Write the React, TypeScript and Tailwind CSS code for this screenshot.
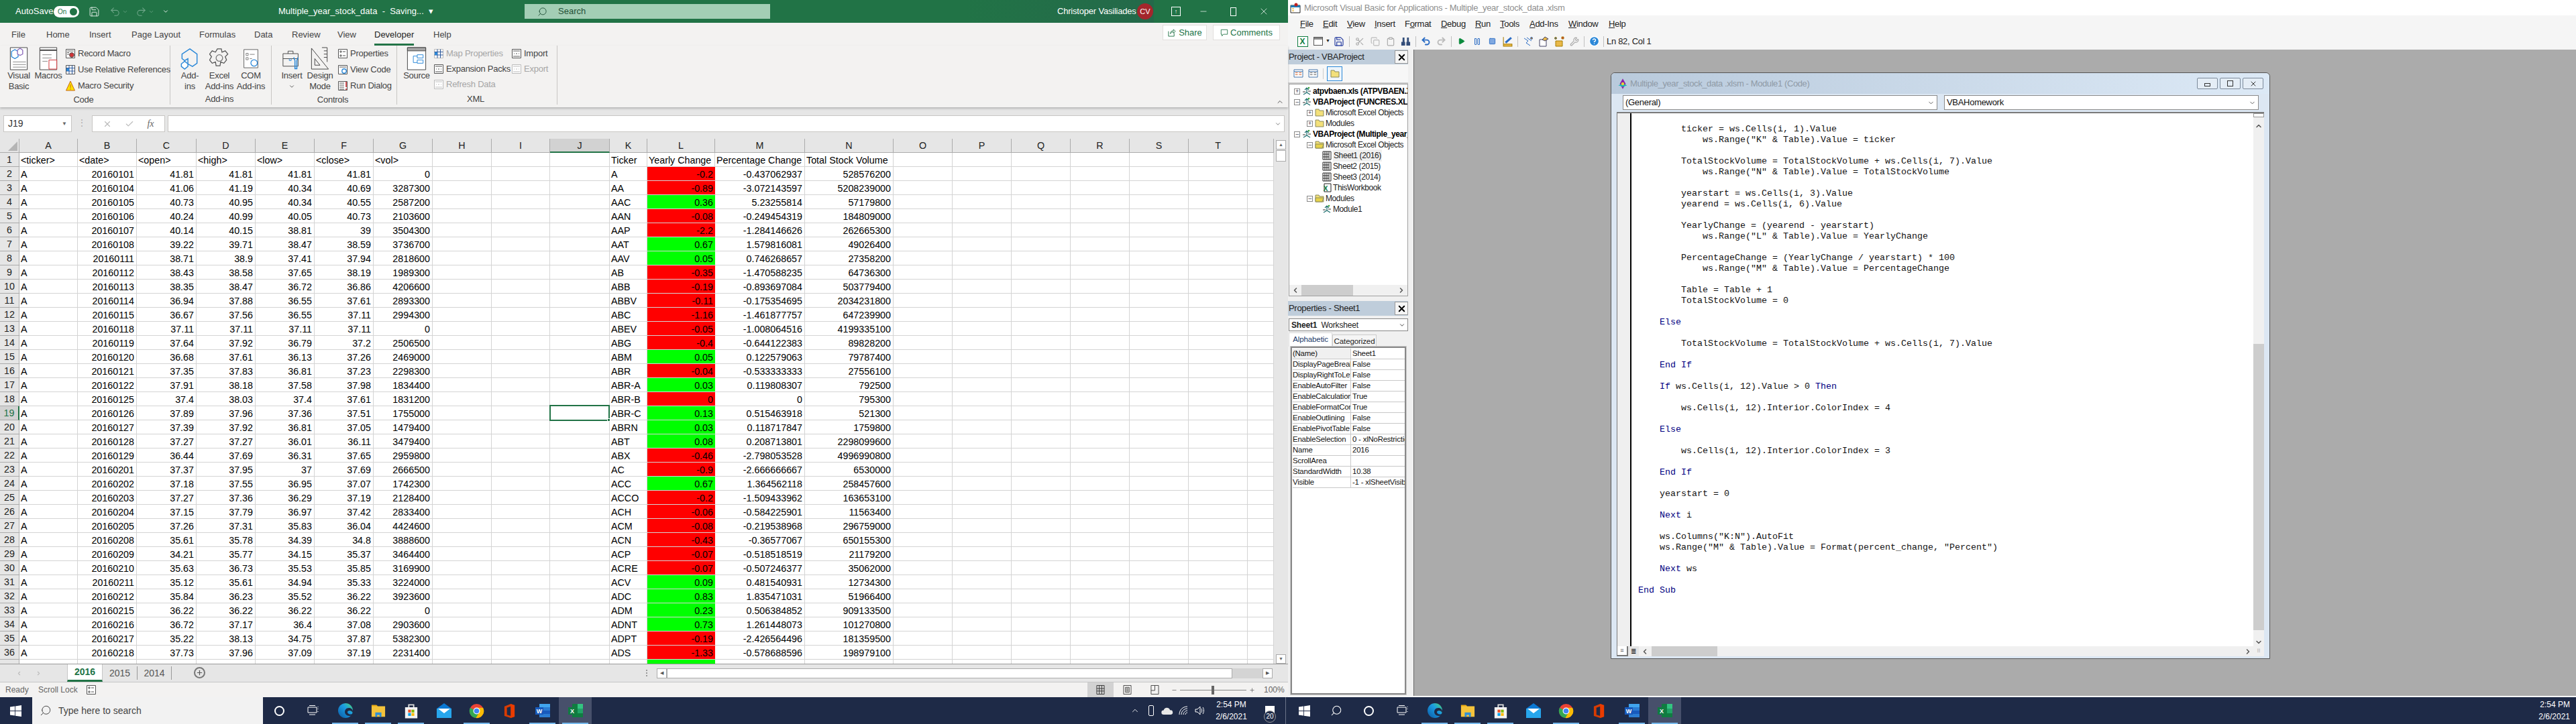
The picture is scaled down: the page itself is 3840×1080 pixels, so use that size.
import React from 'react';
import { ChevronDown, ChevronUp, ChevronLeft, ChevronRight, Check, Plus, Search, Undo2, Redo2, X, Minus, Play, Pause, Square, HelpCircle, Wrench, Scissors, Copy, Clipboard, Save } from 'lucide-react';

const ROWS: string[] = [
  '20160101 41.81 41.81 41.81 41.81 0','20160104 41.06 41.19 40.34 40.69 3287300','20160105 40.73 40.95 40.34 40.55 2587200',
  '20160106 40.24 40.99 40.05 40.73 2103600','20160107 40.14 40.15 38.81 39 3504300','20160108 39.22 39.71 38.47 38.59 3736700',
  '20160111 38.71 38.9 37.41 37.94 2818600','20160112 38.43 38.58 37.65 38.19 1989300','20160113 38.35 38.47 36.72 36.86 4206600',
  '20160114 36.94 37.88 36.55 37.61 2893300','20160115 36.67 37.56 36.55 37.11 2994300','20160118 37.11 37.11 37.11 37.11 0',
  '20160119 37.64 37.92 36.79 37.2 2506500','20160120 36.68 37.61 36.13 37.26 2469000','20160121 37.35 37.83 36.81 37.23 2298300',
  '20160122 37.91 38.18 37.58 37.98 1834400','20160125 37.4 38.03 37.4 37.61 1831200','20160126 37.89 37.96 37.36 37.51 1755000',
  '20160127 37.39 37.92 36.81 37.05 1479400','20160128 37.27 37.27 36.01 36.11 3479400','20160129 36.44 37.69 36.31 37.65 2959800',
  '20160201 37.37 37.95 37 37.69 2666500','20160202 37.18 37.55 36.95 37.07 1742300','20160203 37.27 37.36 36.29 37.19 2128400',
  '20160204 37.15 37.79 36.97 37.42 2833400','20160205 37.26 37.31 35.83 36.04 4424600','20160208 35.61 35.78 34.39 34.8 3888600',
  '20160209 34.21 35.77 34.15 35.37 3464400','20160210 35.63 36.73 35.53 35.85 3169900','20160211 35.12 35.61 34.94 35.33 3224000',
  '20160212 35.84 36.23 35.52 36.22 3923600','20160215 36.22 36.22 36.22 36.22 0','20160216 36.72 37.17 36.4 37.08 2903600',
  '20160217 35.22 38.13 34.75 37.87 5382300','20160218 37.73 37.96 37.09 37.19 2231400',
];

const SUMMARY: string[] = [
  'A -0.2 -0.437062937 528576200','AA -0.89 -3.072143597 5208239000','AAC 0.36 5.23255814 57179800','AAN -0.08 -0.249454319 184809000',
  'AAP -2.2 -1.284146626 262665300','AAT 0.67 1.579816081 49026400','AAV 0.05 0.746268657 27358200','AB -0.35 -1.470588235 64736300',
  'ABB -0.19 -0.893697084 503779400','ABBV -0.11 -0.175354695 2034231800','ABC -1.16 -1.461877757 647239900','ABEV -0.05 -1.008064516 4199335100',
  'ABG -0.4 -0.644122383 89828200','ABM 0.05 0.122579063 79787400','ABR -0.04 -0.533333333 27556100','ABR-A 0.03 0.119808307 792500',
  'ABR-B 0 0 795300','ABR-C 0.13 0.515463918 521300','ABRN 0.03 0.118717847 1759800','ABT 0.08 0.208713801 2298099600',
  'ABX -0.46 -2.798053528 4996990800','AC -0.9 -2.666666667 6530000','ACC 0.67 1.364562118 258457600','ACCO -0.2 -1.509433962 163653100',
  'ACH -0.06 -0.584225901 11563400','ACM -0.08 -0.219538968 296759000','ACN -0.43 -0.36577067 650155300','ACP -0.07 -0.518518519 21179200',
  'ACRE -0.07 -0.507246377 35062000','ACV 0.09 0.481540931 12734300','ADC 0.83 1.835471031 51966400','ADM 0.23 0.506384852 909133500',
  'ADNT 0.73 1.261448073 101270800','ADPT -0.19 -2.426564496 181359500','ADS -1.33 -0.578688596 198979100',
];

const COLS = ['A','B','C','D','E','F','G','H','I','J','K','L','M','N','O','P','Q','R','S','T',''];
const GRID = 'grid grid-cols-[29px_87px_88px_89px_88px_88px_88px_88px_88px_87px_89px_56px_101px_134px_132px_88px_88px_88px_88px_88px_88px_39px]';

const CODE = [
  '        ticker = ws.Cells(i, 1).Value','            ws.Range("K" & Table).Value = ticker','',
  '        TotalStockVolume = TotalStockVolume + ws.Cells(i, 7).Value','            ws.Range("N" & Table).Value = TotalStockVolume','',
  '        yearstart = ws.Cells(i, 3).Value','        yearend = ws.Cells(i, 6).Value','',
  '        YearlyChange = (yearend - yearstart)','            ws.Range("L" & Table).Value = YearlyChange','',
  '        PercentageChange = (YearlyChange / yearstart) * 100','            ws.Range("M" & Table).Value = PercentageChange','',
  '        Table = Table + 1','        TotalStockVolume = 0','',
  '    Else','','        TotalStockVolume = TotalStockVolume + ws.Cells(i, 7).Value','',
  '    End If','','    If ws.Cells(i, 12).Value > 0 Then','','        ws.Cells(i, 12).Interior.ColorIndex = 4','',
  '    Else','','        ws.Cells(i, 12).Interior.ColorIndex = 3','','    End If','','    yearstart = 0','',
  '    Next i','','    ws.Columns("K:N").AutoFit','    ws.Range("M" & Table).Value = Format(percent_change, "Percent")','',
  '    Next ws','','End Sub',
];

const PROPS = [
  ['(Name)','Sheet1'],['DisplayPageBreak','False'],['DisplayRightToLef','False'],['EnableAutoFilter','False'],['EnableCalculation','True'],
  ['EnableFormatCon','True'],['EnableOutlining','False'],['EnablePivotTable','False'],['EnableSelection','0 - xlNoRestrictions'],['Name','2016'],
  ['ScrollArea',''],['StandardWidth','10.38'],['Visible','-1 - xlSheetVisible'],
];

const Doc = ({ className, children }: { className?: string; children?: React.ReactNode }) => (
  <svg viewBox="0 0 30 36" className={className} fill="none">
    <path d="M2 1h26v34H2z" fill="#fff" stroke="#444" />
    {children}
  </svg>
);

const Tiny = ({ color = '#555', kind = 'lines' }: { color?: string; kind?: string }) => (
  <svg viewBox="0 0 16 16" className="w-[16px] h-[16px] shrink-0" fill="none" stroke={color}>
    <path d="M1.5 1.5h13v13h-13z" fill="#fff" />
    {kind === 'rec' && <circle cx="10" cy="10" r="3.4" fill="#d13438" stroke="#555" />}
    {kind === 'rec' && <path d="M3 4h10M3 6.500h3M3 9h3" />}
    {kind === 'grid' && <path d="M1.5 5.500h13M1.5 10h13M6 1.500v13M10.500 1.500v13" stroke="#2b579a" />}
    {kind === 'grid' && <path d="M2 6h4v4H2z" fill="#2b88d8" stroke="none" />}
    {kind === 'lines' && <path d="M4 4h2v2H4zM4 10h2v2H4zM8 5h4M8 11h4" />}
    {kind === 'find' && <circle cx="10" cy="10" r="3.2" stroke="#2b88d8" strokeWidth="1.4" />}
    {kind === 'find' && <path d="M3 4h10" />}
    {kind === 'run' && <path d="M3 4h7M3 7h7M3 10h7M3 13h7" />}
    {kind === 'run' && <path d="M13 2v8M13 12v2" stroke="#d13438" strokeWidth="1.6" />}
    {kind === 'xml' && <path d="M4 8h1M7 8h2M11 8h1M3 4h10M3 12h10" />}
  </svg>
);

const Warn = () => (
  <svg viewBox="0 0 16 16" className="w-[16px] h-[16px] shrink-0">
    <path d="M8 1l6.500 14h-13z" fill="#fce100" stroke="#c8671a" />
    <path d="M8 6v5M8 12v1.500" stroke="#c8671a" />
  </svg>
);

const SmallRow = ({ icon, label, dim, h = 'h-[24px]' }: { icon: React.ReactNode; label: string; dim?: boolean; h?: string }) => (
  <div className={`flex items-center gap-[3px] ${h} whitespace-nowrap ${dim ? 'text-[#a6a6a6]' : 'text-[#444]'}`}>
    {icon}
    <span>{label}</span>
  </div>
);

const BigBtn = ({ w, icon, lines, chevron }: { w: string; icon: React.ReactNode; lines: string[]; chevron?: boolean }) => (
  <div className={`${w} shrink-0 flex flex-col items-center text-[#444] leading-[16px] text-center`}>
    <div className="h-[37px] pt-[2px] flex items-start justify-center">{icon}</div>
    {lines.map((l) => <div key={l} className="whitespace-nowrap">{l}</div>)}
    {chevron && <ChevronDown className="w-[10px] h-[10px] mt-[3px]" />}
  </div>
);

const Group = ({ w, label, children }: { w: string; label: string; children: React.ReactNode }) => (
  <div className={`${w} shrink-0 h-[88px] border-r border-[#c8c6c4] flex flex-col`}>
    <div className="h-[76px] flex">{children}</div>
    <div className="text-center text-[#444] leading-[16px] pr-[4px] pt-[1px]">{label}</div>
  </div>
);

const TitleBar = () => (
  <div className="h-[34px] bg-[#217346] flex items-center text-white text-[13px] relative overflow-hidden shrink-0">
    <div className="absolute left-[1440px] top-0 w-[280px] h-[34px] bg-gradient-to-r from-[#217346] to-[#24694a]" />
    <span className="ml-[23px] w-[57px]">AutoSave</span>
    <div className="w-[38px] h-[17px] rounded-full bg-white text-[#217346] text-[10px] flex items-center justify-between pl-[6px] pr-[3px]">
      On <span className="w-[11px] h-[11px] rounded-full bg-[#217346]" />
    </div>
    <Save className="ml-[14px] w-[17px] h-[17px]" strokeWidth={1.2} />
    <Undo2 className="ml-[14px] w-[17px] h-[17px] text-[#6fa78a]" strokeWidth={1.5} />
    <ChevronDown className="w-[9px] h-[9px] text-[#6fa78a] ml-[2px]" />
    <Redo2 className="ml-[11px] w-[17px] h-[17px] text-[#6fa78a]" strokeWidth={1.5} />
    <ChevronDown className="w-[9px] h-[9px] text-[#6fa78a] ml-[2px]" />
    <ChevronDown className="w-[10px] h-[10px] ml-[12px]" />
    <span className="ml-[163px] w-[205px] whitespace-nowrap">Multiple_year_stock_data&nbsp; -&nbsp; Saving...&nbsp; ▾</span>
    <div className="ml-[162px] w-[366px] h-[22px] bg-[#a3ceb5] flex items-center text-[#1f4e36]">
      <Search className="ml-[19px] w-[15px] h-[15px] -scale-x-100" strokeWidth={1.4} />
      <span className="ml-[16px]">Search</span>
    </div>
    <span className="ml-[428px] w-[112px] whitespace-nowrap relative tracking-[-0.2px]">Christoper Vasiliades</span>
    <div className="ml-[7px] w-[24px] h-[24px] rounded-full bg-[#a4262c] flex items-center justify-center text-[11px] relative">CV</div>
    <div className="ml-[27px] w-[14px] h-[14px] border border-white flex items-center justify-center text-[9px] leading-none relative">↑</div>
    <Minus className="ml-[27px] w-[14px] h-[14px] relative" strokeWidth={1.2} />
    <div className="ml-[33px] w-[9px] h-[13px] border border-white relative" />
    <X className="ml-[33px] w-[16px] h-[16px] relative" strokeWidth={1.1} />
  </div>
);

const RibbonTabs = () => {
  const tabs: [string, string][] = [['File','w-[52px]'],['Home','w-[64px]'],['Insert','w-[63px]'],['Page Layout','w-[101px]'],['Formulas','w-[82px]'],['Data','w-[56px]'],['Review','w-[68px]'],['View','w-[55px]'],['Developer','w-[88px]'],['Help','w-[60px]']];
  return (
    <div className="h-[34px] pl-[17px] flex items-start text-[13px] text-[#444] relative shrink-0">
      {tabs.map(([t, w]) => (
        <div key={t} className={`${w} pt-[8px]`}>
          <span className={`inline-block h-[26px] ${t === 'Developer' ? 'border-b-[3px] border-[#217346] text-[#222]' : ''}`}>{t}</span>
        </div>
      ))}
      <div className="ml-auto flex items-start gap-[9px] pr-[12px] pt-[3px] text-[#217346]">
        <div className="w-[66px] h-[23px] bg-white border border-[#e1dfdd] flex items-center justify-center gap-[4px]">
          <svg viewBox="0 0 14 14" className="w-[13px] h-[13px]" fill="none" stroke="#217346"><path d="M2 5v8h9V8M5 9c0-3 2-5 5-5V2l3 3-3 3V6c-2 0-4 1-5 3z" /></svg>Share
        </div>
        <div className="w-[100px] h-[23px] bg-white border border-[#e1dfdd] flex items-center justify-center gap-[3px]">
          <svg viewBox="0 0 14 14" className="w-[12px] h-[12px]" fill="none" stroke="#217346"><path d="M1.500 1.500h11v8h-7l-2.500 3v-3h-1.500z" /></svg>Comments
        </div>
      </div>
    </div>
  );
};

const Ribbon = () => (
  <div className="h-[92px] flex text-[13px] tracking-[-0.25px] relative shadow-[0_2px_3px_#b5b5b5] shrink-0 bg-[#f3f2f1] z-10">
    <Group w="w-[254px]" label="Code">
      <BigBtn w="w-[52px] pl-[4px]" lines={['Visual', 'Basic']} icon={
        <Doc className="w-[30px] h-[35px]">
          <path d="M4 7l5-3 5 3v8l-5 3-5-3z" fill="#fff" stroke="#2b88d8" strokeWidth="1.3" />
          <path d="M13 5l4-3 4 3v6l-4 2-4-2z" fill="#fff" stroke="#8764b8" strokeWidth="1.3" />
          <path d="M6 23h20M6 27h20M6 31h20" stroke="#888" />
        </Doc>} />
      <BigBtn w="w-[40px]" lines={['Macros']} icon={
        <Doc className="w-[30px] h-[35px]">
          <path d="M2 5h26" stroke="#444" strokeWidth="2" />
          <path d="M6 12h14M6 17h14M6 22h8" stroke="#888" />
          <path d="M16 20h12v14H16z" fill="#fff" stroke="#d13438" />
        </Doc>} />
      <div className="ml-[5px] flex flex-col">
        <SmallRow icon={<Tiny kind="rec" />} label="Record Macro" />
        <SmallRow icon={<Tiny kind="grid" />} label="Use Relative References" />
        <SmallRow icon={<Warn />} label="Macro Security" />
      </div>
    </Group>
    <Group w="w-[151px]" label="Add-ins">
      <BigBtn w="w-[50px] pl-[8px]" lines={['Add-', 'ins']} icon={
        <svg viewBox="0 0 30 36" className="w-[30px] h-[35px]" fill="none" stroke="#2b88d8" strokeWidth="1.5">
          <path d="M15 3l11 8v14l-7 5-7-4V18l-5 3-4-3v-7z" /><path d="M7 22l5 4v4l-5 4-5-4v-4z" fill="#fff" />
        </svg>} />
      <BigBtn w="w-[46px]" lines={['Excel', 'Add-ins']} icon={
        <svg viewBox="0 0 30 36" className="w-[30px] h-[35px]" fill="none" stroke="#555" strokeWidth="1.3">
          <path d="M12 3h6l1 5 5-2 4 5-4 4 2 5-4 5-5-2-1 6h-6l-1-6-5 2-4-5 3-5-3-4 4-5 5 2z" /><circle cx="15" cy="17" r="5" stroke="#777" />
        </svg>} />
      <BigBtn w="w-[48px]" lines={['COM', 'Add-ins']} icon={
        <Doc className="w-[24px] h-[35px]">
          <path d="M6 8h4v4H6zM6 16h4v4H6zM13 10h9M13 18h4" stroke="#666" />
          <circle cx="21" cy="26" r="6" fill="#fff" stroke="#2b88d8" strokeWidth="1.6" />
        </Doc>} />
    </Group>
    <Group w="w-[187px]" label="Controls">
      <BigBtn w="w-[48px] pl-[12px]" lines={['Insert']} chevron icon={
        <svg viewBox="0 0 32 36" className="w-[30px] h-[35px]" fill="none" stroke="#444">
          <path d="M2 10h24v20H2zM10 10V6h8v4M2 18h24" />
          <path d="M19 16l2 5v13h3V21l2-5" stroke="#2b88d8" strokeWidth="1.6" />
          <path d="M12 18v3h3v-3" stroke="#2b88d8" />
        </svg>} />
      <BigBtn w="w-[48px]" lines={['Design', 'Mode']} icon={
        <svg viewBox="0 0 30 36" className="w-[30px] h-[35px]" fill="none" stroke="#444">
          <path d="M2 2l26 32H2z" /><path d="M7 18l8 10H7z" />
          <path d="M18 1h8v22" /><path d="M21 6h5M21 11h5M21 16h5" />
        </svg>} />
      <div className="ml-[2px] flex flex-col">
        <SmallRow icon={<Tiny kind="lines" />} label="Properties" />
        <SmallRow icon={<Tiny kind="find" />} label="View Code" />
        <SmallRow icon={<Tiny kind="run" />} label="Run Dialog" />
      </div>
    </Group>
    <Group w="w-[239px]" label="XML">
      <BigBtn w="w-[54px] pl-[4px]" lines={['Source']} icon={
        <svg viewBox="0 0 30 36" className="w-[30px] h-[35px]" fill="none" stroke="#444">
          <path d="M1 1h28v34H1z" fill="#fff" /><path d="M1 1h28v5H1z" fill="#a6a6a6" />
          <path d="M16 12h9v5h-9zM16 20h9v5h-9zM10 14h6M10 14v10h6" stroke="#2b88d8" />
        </svg>} />
      <div className="flex flex-col w-[116px]">
        <SmallRow dim h="h-[23px]" icon={<Tiny color="#bbb" kind="grid" />} label="Map Properties" />
        <SmallRow h="h-[23px]" icon={<Tiny kind="xml" />} label="Expansion Packs" />
        <SmallRow dim h="h-[23px]" icon={<Tiny color="#bbb" kind="xml" />} label="Refresh Data" />
      </div>
      <div className="flex flex-col">
        <SmallRow h="h-[23px]" icon={<Tiny kind="xml" />} label="Import" />
        <SmallRow dim h="h-[23px]" icon={<Tiny color="#bbb" kind="xml" />} label="Export" />
      </div>
    </Group>
    <ChevronUp className="absolute right-[6px] bottom-[2px] w-[12px] h-[12px] text-[#555]" />
  </div>
);

const FormulaBar = () => (
  <div className="h-[47px] bg-[#e6e6e6] flex items-start pt-[12px] pl-[5px] text-[14px] shrink-0">
    <div className="w-[102px] h-[25px] bg-white border border-[#c8c6c4] flex items-center justify-between px-[6px] text-[#333]">
      J19<span className="text-[8px] text-[#666]">▼</span>
    </div>
    <div className="w-[30px] text-center text-[#aaa] leading-[22px] text-[12px]">⋮</div>
    <div className="w-[109px] h-[25px] bg-white border border-[#c8c6c4] flex items-center justify-around px-[6px] text-[#bbb]">
      <X className="w-[14px] h-[14px]" /><Check className="w-[14px] h-[14px]" />
      <span className="font-['Liberation_Serif',serif] italic text-[#666]">fx</span>
    </div>
    <div className="ml-[4px] w-[1665px] h-[25px] bg-white border border-[#c8c6c4] flex items-center justify-end pr-[4px]">
      <ChevronDown className="w-[10px] h-[10px] text-[#666]" />
    </div>
  </div>
);

const RowCells = ({ r }: { r: number }) => {
  const cell = 'h-[21px] border-r border-b border-[#d4d4d4] overflow-hidden whitespace-nowrap leading-[21px] pt-[1px]';
  const hdr = ['<ticker>', '<date>', '<open>', '<high>', '<low>', '<close>', '<vol>'];
  const sum = r >= 2 && r <= 36 ? SUMMARY[r - 2].split(' ') : null;
  const data = r >= 2 && r <= 36 ? ['A', ...ROWS[r - 2].split(' ')] : null;
  const sel = r === 19;
  const lBg = r === 1 ? 'bg-white' : r === 37 ? 'bg-[#00ff00]' : sum && (sum[1].startsWith('-') || sum[1] === '0') ? 'bg-[#ff0000]' : 'bg-[#00ff00]';
  return (
    <>
      <div className={`h-[21px] border-b border-[#ababab] text-center leading-[21px] ${sel ? 'bg-[#d2d2d2] text-[#217346] border-r-2 border-r-[#217346]' : 'bg-[#e6e6e6] border-r border-r-[#ababab] text-[#222]'}`}>{r === 37 ? '' : r}</div>
      {Array.from({ length: 7 }, (_, i) => (
        <div key={i} className={`${cell} bg-white ${r === 1 || i === 0 ? 'pl-[2px]' : 'text-right pr-[3px]'}`}>
          {r === 1 ? hdr[i] : data ? data[i] : ''}
        </div>
      ))}
      <div className={`${cell} bg-white`} />
      <div className={`${cell} bg-white`} />
      <div className={`h-[21px] border-r border-b border-[#d4d4d4] bg-white relative`}>
        {sel && <div className="absolute -left-[1px] -top-[2px] w-[90px] h-[24px] border-2 border-[#217346] z-10"><div className="absolute -right-[3px] -bottom-[3px] w-[5px] h-[5px] bg-[#217346] border border-white" /></div>}
      </div>
      <div className={`${cell} bg-white pl-[2px]`}>{r === 1 ? 'Ticker' : sum ? sum[0] : ''}</div>
      <div className={`h-[21px] border-b border-[#d4d4d4] overflow-hidden whitespace-nowrap leading-[21px] pt-[1px] ${lBg} ${r === 1 ? 'pl-[2px] border-r' : 'text-right pr-[3px]'}`}>{r === 1 ? 'Yearly Change' : sum ? sum[1] : ''}</div>
      <div className={`${cell} bg-white ${r === 1 ? 'pl-[2px]' : 'text-right pr-[3px]'}`}>{r === 1 ? 'Percentage Change' : sum ? sum[2] : ''}</div>
      <div className={`${cell} bg-white ${r === 1 ? 'pl-[2px]' : 'text-right pr-[3px]'}`}>{r === 1 ? 'Total Stock Volume' : sum ? sum[3] : ''}</div>
      {Array.from({ length: 7 }, (_, i) => <div key={i} className={`${cell} bg-white`} />)}
    </>
  );
};

const Sheet = () => {
  const rows = Array.from({ length: 37 }, (_, i) => i + 1);
  return (
    <div className="h-[783px] flex bg-[#e6e6e6] overflow-hidden shrink-0 text-[14.3px] text-black">
      <div className="w-[1899px] shrink-0 overflow-hidden">
        <div className={GRID}>
          <div className="h-[21px] bg-[#e6e6e6] border-r border-b border-[#ababab] relative overflow-hidden">
            <div className="absolute right-[2px] bottom-[2px] w-0 h-0 border-l-[14px] border-l-transparent border-b-[14px] border-b-[#b5b5b5]" />
          </div>
          {COLS.map((c, i) => (
            <div key={i} className={`h-[21px] border-r border-[#ababab] text-center leading-[21px] text-[#222] ${c === 'J' ? 'bg-[#d2d2d2] border-b-2 border-b-[#217346]' : 'bg-[#e6e6e6] border-b border-b-[#ababab]'}`}>{c}</div>
          ))}
          {rows.map((r) => <RowCells key={r} r={r} />)}
        </div>
      </div>
      <div className="w-[21px] pl-[3px] flex flex-col pt-[2px]">
        <div className="w-[15px] h-[14px] bg-white border border-[#ababab] flex items-center justify-center text-[7px] text-[#666]">▲</div>
        <div className="w-[15px] h-[17px] mt-[1px] bg-white border border-[#ababab]" />
        <div className="flex-1" />
        <div className="w-[15px] h-[14px] bg-white border border-[#ababab] flex items-center justify-center text-[7px] text-[#666]">▼</div>
      </div>
    </div>
  );
};

const SheetTabs = () => (
  <div className="h-[28px] bg-[#e6e6e6] border-t border-t-[#9a9a9a] border-b border-b-[#c6c6c6] flex items-stretch text-[14px] text-[#555] shrink-0">
    <div className="w-[100px] flex items-center gap-[20px] pl-[24px] text-[#bbb]">
      <ChevronLeft className="w-[9px] h-[9px]" strokeWidth={3} /><ChevronRight className="w-[9px] h-[9px]" strokeWidth={3} />
    </div>
    <div className="w-[53px] bg-white border-b-[3px] border-b-[#217346] border-x border-x-[#c6c6c6] text-[#217346] font-bold flex items-center justify-center">2016</div>
    <div className="w-[52px] flex items-center justify-center border-r border-[#999] my-[3px]">2015</div>
    <div className="w-[51px] flex items-center justify-center border-r border-[#999] my-[3px]">2014</div>
    <div className="ml-[33px] w-[17px] h-[17px] mt-[4px] rounded-full border-2 border-[#777] flex items-center justify-center">
      <Plus className="w-[11px] h-[11px]" strokeWidth={2.5} />
    </div>
    <div className="ml-[657px] w-[3px] h-[10px] mt-[8px] border-l-2 border-dotted border-[#999]" />
    <div className="ml-[13px] mt-[6px] w-[15px] h-[15px] bg-white border border-[#ababab] flex items-center justify-center text-[7px]">◀</div>
    <div className="w-[843px] mt-[6px] h-[15px] bg-white border border-[#ababab]" />
    <div className="w-[45px] mt-[6px] h-[15px] bg-[#d4d4d4]" />
    <div className="w-[15px] mt-[6px] h-[15px] bg-white border border-[#ababab] flex items-center justify-center text-[7px]">▶</div>
  </div>
);

const StatusBar = () => (
  <div className="h-[22px] bg-[#f3f2f1] flex items-center text-[12px] text-[#666] shrink-0 pl-[8px]">
    <span className="w-[49px]">Ready</span>
    <span className="w-[71px]">Scroll Lock</span>
    <Tiny kind="lines" />
    <div className="ml-[1477px] w-[39px] h-[22px] bg-[#d2d2d2] flex items-center justify-center">
      <svg viewBox="0 0 14 16" className="w-[13px] h-[16px]" fill="none" stroke="#333"><path d="M1 1h12v14H1zM1 6h12M1 10h12M5 1v14M9 1v14" /></svg>
    </div>
    <div className="w-[41px] flex justify-center">
      <svg viewBox="0 0 14 16" className="w-[13px] h-[16px]" fill="none" stroke="#444"><path d="M1 1h12v14H1zM4 4h6v8H4zM5 6h4M5 8h4M5 10h4" /></svg>
    </div>
    <div className="w-[41px] flex justify-center">
      <svg viewBox="0 0 14 16" className="w-[13px] h-[16px]" fill="none" stroke="#444"><path d="M1 1h12v14H1zM7 1v8H1" /></svg>
    </div>
    <Minus className="ml-[4px] w-[9px] h-[9px]" />
    <div className="ml-[4px] w-[99px] h-[1px] bg-[#888] relative">
      <div className="absolute left-[47px] -top-[6px] w-[4px] h-[13px] bg-[#666]" />
    </div>
    <Plus className="ml-[4px] w-[9px] h-[9px]" />
    <span className="ml-[13px]">100%</span>
  </div>
);

const WinLogo = () => (
  <svg viewBox="0 0 16 16" className="w-[17px] h-[17px]" fill="#fff"><path d="M0 2.300l6.600-.9v6.200H0zM7.400 1.300L16 0v7.600H7.400zM0 8.400h6.600v6.200L0 13.700zM7.400 8.400H16V16l-8.600-1.200z" /></svg>
);
const EdgeIcon = () => (
  <svg viewBox="0 0 24 24" className="w-[24px] h-[24px]">
    <defs>
      <linearGradient id="edg" x1="0" y1="1" x2="1" y2="0"><stop offset="0" stopColor="#0c59a4" /><stop offset="0.6" stopColor="#1b9de2" /><stop offset="1" stopColor="#4fd96b" /></linearGradient>
    </defs>
    <circle cx="12" cy="12" r="11" fill="url(#edg)" />
    <path d="M23 13c0-3-3-5-6-5-4 0-6 3-6 6s3 6 7 6c2 0 4-1 5-3-1 0-6 2-8-2-1-3 5-5 8 0z" fill="#1e2a47" />
  </svg>
);
const FolderIcon = () => (
  <svg viewBox="0 0 24 24" className="w-[22px] h-[24px]">
    <path d="M1 3h8l2 2h12v17H1z" fill="#f5c33b" /><path d="M1 3h8l2 2H1z" fill="#e9a70d" />
    <path d="M7 22v-7h10v7h-3v-3h-4v3z" fill="#2f8fd6" />
  </svg>
);
const StoreIcon = () => (
  <svg viewBox="0 0 24 26" className="w-[22px] h-[25px]">
    <path d="M8 7V3h8v4" fill="none" stroke="#ddd" strokeWidth="2" /><path d="M2 7h20v18H2z" fill="#f3f3f3" />
    <path d="M7 11h4.500v4.500H7z" fill="#f25022" /><path d="M12.500 11H17v4.500h-4.500z" fill="#7fba00" />
    <path d="M7 16.500h4.500V21H7z" fill="#00a4ef" /><path d="M12.500 16.500H17V21h-4.500z" fill="#ffb900" />
  </svg>
);
const MailIcon = () => (
  <svg viewBox="0 0 24 24" className="w-[24px] h-[24px]">
    <path d="M1 9l11-8 11 8v14H1z" fill="#0a78d4" /><path d="M1 9h22v14H1z" fill="#27a6ec" /><path d="M3 9h18l-9 7z" fill="#fff" />
  </svg>
);
const ChromeIcon = () => (
  <svg viewBox="0 0 24 24" className="w-[23px] h-[23px]">
    <circle cx="12" cy="12" r="11" fill="#ea4335" /><path d="M2 7a11 11 0 0 0 9 16l5-9z" fill="#34a853" />
    <path d="M12 7h10a11 11 0 0 1-11 16l5-9z" fill="#fbbc05" /><circle cx="12" cy="12" r="5.200" fill="#fff" /><circle cx="12" cy="12" r="4" fill="#4285f4" />
  </svg>
);
const OfficeIcon = () => (
  <svg viewBox="0 0 20 24" className="w-[19px] h-[25px]">
    <path d="M2 5l10-4 6 2v18l-6 2L2 20z" fill="#d83b01" /><path d="M6 7l6-2v15l-6-2z" fill="#1e2a47" /><path d="M12 1l6 2v18l-6 2z" fill="#eb3c00" />
  </svg>
);
const WordIcon = () => (
  <svg viewBox="0 0 24 24" className="w-[24px] h-[24px]">
    <path d="M7 2h16v20H7z" fill="#2b7cd3" /><path d="M7 2h16v5H7z" fill="#41a5ee" /><path d="M7 12h16v5H7z" fill="#185abd" />
    <path d="M1 7h12v11H1z" fill="#185abd" />
    <text x="7" y="16" textAnchor="middle" fill="#fff" fontSize="9" fontWeight="700" fontFamily="Liberation Sans, sans-serif">W</text>
  </svg>
);
const ExcelIcon = () => (
  <svg viewBox="0 0 24 24" className="w-[24px] h-[24px]">
    <path d="M7 2h16v20H7z" fill="#107c41" /><path d="M15 2h8v7h-8z" fill="#33c481" /><path d="M15 9h8v7h-8z" fill="#21a366" />
    <path d="M1 7h12v11H1z" fill="#107c41" />
    <text x="7" y="16" textAnchor="middle" fill="#fff" fontSize="9" fontWeight="700" fontFamily="Liberation Sans, sans-serif">X</text>
  </svg>
);

const Slot = ({ active, highlight, children }: { active?: boolean; highlight?: boolean; children: React.ReactNode }) => (
  <div className={`w-[49px] h-[40px] flex items-center justify-center relative ${highlight ? 'bg-[#47506b]' : ''}`}>
    {children}
    {active && <div className="absolute left-[5px] right-[5px] bottom-0 h-[2px] bg-[#76b9ed]" />}
  </div>
);

const Apps = () => (
  <>
    <Slot><div className="w-[15px] h-[15px] rounded-full border-2 border-white" /></Slot>
    <Slot>
      <svg viewBox="0 0 18 18" className="w-[18px] h-[18px]" fill="none" stroke="#fff"><path d="M2 4h13v8H2zM4 1.500h9M4 15h9M17 3v1M17 6v1M17 10v1" /></svg>
    </Slot>
    <Slot active><EdgeIcon /></Slot>
    <Slot active><FolderIcon /></Slot>
    <Slot active><StoreIcon /></Slot>
    <Slot><MailIcon /></Slot>
    <Slot active><ChromeIcon /></Slot>
    <Slot><OfficeIcon /></Slot>
    <Slot active><WordIcon /></Slot>
    <Slot active highlight><ExcelIcon /></Slot>
  </>
);

const Clock = ({ className }: { className: string }) => (
  <div className={`text-white text-[12px] leading-[18px] ${className}`}>
    <div>2:54 PM</div>
    <div>2/6/2021</div>
  </div>
);

const TaskbarLeft = () => (
  <div className="h-[40px] bg-[#1e2a47] flex items-center shrink-0">
    <div className="w-[48px] flex justify-center pr-[1px]"><WinLogo /></div>
    <div className="w-[344px] h-[40px] bg-[#f2f2f2] flex items-center text-[#444] text-[14px]">
      <Search className="ml-[11px] w-[18px] h-[18px] -scale-x-100" strokeWidth={1.3} />
      <span className="ml-[10px]">Type here to search</span>
    </div>
    <Apps />
    <div className="ml-auto flex items-center text-white">
      <ChevronUp className="w-[24px] h-[14px]" strokeWidth={1.5} />
      <div className="w-[24px] flex justify-center"><div className="w-[8px] h-[16px] border border-white rounded-[2px]" /></div>
      <svg viewBox="0 0 16 12" className="w-[24px] h-[13px]" fill="#e8e8e8"><path d="M3 11a3 3 0 0 1 0-6c1-4 7-5 9 0a3 3 0 0 1 1 6z" /></svg>
      <svg viewBox="0 0 16 16" className="w-[24px] h-[16px]" fill="none" stroke="#fff"><path d="M2 14c0-7 5-12 12-12M5 14c0-5 4-9 9-9M8 14c0-3 3-6 6-6M11 14c0-1.500 1-3 3-3" /></svg>
      <svg viewBox="0 0 16 16" className="w-[24px] h-[16px]" fill="none" stroke="#fff"><path d="M2 6h3l4-4v12l-4-4H2zM11 5c1 2 1 4 0 6M13 3c2 3 2 7 0 10" /></svg>
      <Clock className="w-[69px] text-center ml-[1px]" />
      <div className="w-[46px] flex justify-center relative">
        <svg viewBox="0 0 16 16" className="w-[16px] h-[16px]" fill="#fff"><path d="M1 1h14v11H6l-3 3v-3H1z" /></svg>
        <span className="absolute left-[14px] top-[8px] w-[18px] h-[18px] rounded-full bg-[#1e2a47] border border-[#999] text-[10px] leading-[16px] text-center">20</span>
      </div>
      <div className="w-[4px] h-[40px] border-l border-[#6b7489]" />
    </div>
  </div>
);

const TaskbarRight = () => (
  <div className="h-[40px] bg-[#1e2a47] flex items-center shrink-0">
    <div className="w-[48px] flex justify-center"><WinLogo /></div>
    <div className="w-[48px] flex justify-center">
      <Search className="w-[18px] h-[18px] -scale-x-100 text-white" strokeWidth={1.4} />
    </div>
    <Apps />
    <Clock className="ml-auto pr-[9px] text-right" />
  </div>
);

const Excel = () => (
  <div className="w-[1920px] h-[1080px] flex flex-col shrink-0 bg-[#f3f2f1] font-['Liberation_Sans',Arial,sans-serif]">
    <TitleBar />
    <RibbonTabs />
    <Ribbon />
    <FormulaBar />
    <Sheet />
    <SheetTabs />
    <StatusBar />
    <TaskbarLeft />
  </div>
);

const MENUS: [string, string, string][] = [['','F','ile'],['','E','dit'],['','V','iew'],['','I','nsert'],['F','o','rmat'],['','D','ebug'],['','R','un'],['','T','ools'],['','A','dd-Ins'],['','W','indow'],['','H','elp']];
const MENU_W = ['w-[34px]','w-[36px]','w-[41px]','w-[45px]','w-[54px]','w-[51px]','w-[37px]','w-[44px]','w-[58px]','w-[60px]','w-[40px]'];

const TbIcon = ({ w = 'w-[23px]', children }: { w?: string; children: React.ReactNode }) => (
  <div className={`${w} h-[24px] flex items-center justify-center shrink-0`}>{children}</div>
);
const TbSep = () => <div className="w-[1px] h-[16px] bg-[#c0c0c0] mx-[3px] shrink-0" />;

const VbeToolbar = () => (
  <div className="h-[25px] bg-[#f5f5f5] flex items-center pl-[10px] text-[12px] shrink-0">
    <TbIcon><div className="w-[16px] h-[16px] bg-[#fff] border border-[#107c41] text-[#107c41] text-[12px] leading-[14px] font-bold text-center">X</div></TbIcon>
    <TbIcon><div className="w-[14px] h-[13px] border border-[#555] bg-white"><div className="h-[3px] bg-[#888]" /></div></TbIcon>
    <div className="text-[7px] text-[#222] w-[7px]">▼</div>
    <TbIcon w="w-[25px]"><Save className="w-[16px] h-[16px] text-[#3b4fa8]" /></TbIcon>
    <TbSep />
    <TbIcon><Scissors className="w-[14px] h-[14px] text-[#aaa]" /></TbIcon>
    <TbIcon><Copy className="w-[14px] h-[14px] text-[#bbb]" /></TbIcon>
    <TbIcon><Clipboard className="w-[14px] h-[14px] text-[#aaa]" /></TbIcon>
    <TbIcon>
      <svg viewBox="0 0 16 16" className="w-[15px] h-[15px]" fill="#334e7a"><path d="M1 9h6v6H1zM9 9h6v6H9zM3 2h3v7H3zM10 2h3v7h-3z" /></svg>
    </TbIcon>
    <TbSep />
    <TbIcon><Undo2 className="w-[15px] h-[15px] text-[#2b6cc4]" strokeWidth={3} /></TbIcon>
    <TbIcon><Redo2 className="w-[15px] h-[15px] text-[#bbb]" strokeWidth={3} /></TbIcon>
    <TbSep />
    <TbIcon><Play className="w-[11px] h-[11px] text-[#0a8a3c] fill-[#0a8a3c]" /></TbIcon>
    <TbIcon><Pause className="w-[12px] h-[12px] text-[#2b6cc4]" /></TbIcon>
    <TbIcon><Square className="w-[11px] h-[11px] text-[#2b6cc4] fill-[#7fa8e0]" /></TbIcon>
    <TbIcon>
      <svg viewBox="0 0 16 16" className="w-[17px] h-[17px]" fill="none"><path d="M2 2v10h12v3H2z" fill="#e9b949" stroke="#a67c00" /><path d="M4 9l8-7 2 2-8 7z" fill="#2b6cc4" /></svg>
    </TbIcon>
    <TbSep />
    <TbIcon><svg viewBox="0 0 16 16" className="w-[16px] h-[16px]" fill="none" stroke="#2b6cc4"><path d="M2 3l6 4-3 3 6 4M6 2l7 5" /><circle cx="13" cy="3" r="1.500" fill="#e07b00" /></svg></TbIcon>
    <TbIcon><svg viewBox="0 0 16 16" className="w-[16px] h-[16px]" fill="#fff" stroke="#446"><path d="M2 5h10v10H2z" /><path d="M6 5l4-4 5 3-5 3z" fill="#e9b949" /></svg></TbIcon>
    <TbIcon><svg viewBox="0 0 16 16" className="w-[16px] h-[16px]" fill="#e9b949" stroke="#a67c00"><path d="M3 7h10v8H3z" /><circle cx="3" cy="3" r="1.500" fill="#2b6cc4" /><path d="M12 1h3v3h-3z" fill="#d13438" /></svg></TbIcon>
    <TbIcon><Wrench className="w-[14px] h-[14px] text-[#aaa]" /></TbIcon>
    <TbSep />
    <TbIcon w="w-[22px]"><HelpCircle className="w-[17px] h-[17px] text-white fill-[#2b88d8]" /></TbIcon>
    <TbSep />
    <span className="ml-[1px] whitespace-nowrap text-[13px] tracking-[-0.3px] text-[#222]">Ln 82, Col 1</span>
  </div>
);

const Folder = ({ open }: { open?: boolean }) => (
  <svg viewBox="0 0 14 12" className="w-[14px] h-[12px] shrink-0"><path d="M1 1h5l1 2h6v8H1z" fill="#f3e07a" stroke="#8a8a5a" />{open && <path d="M1 5h12l-2 6H1z" fill="#e6d24a" stroke="#8a8a5a" />}</svg>
);
const Vba = () => (
  <svg viewBox="0 0 14 14" className="w-[14px] h-[14px] shrink-0" fill="none">
    <path d="M2 12l5-3 5 3M7 9V3M4 5l3-3 3 3" stroke="#1e6e6e" strokeWidth="1.2" /><circle cx="10" cy="2" r="1.200" fill="#2ca02c" /><path d="M1 8h4M9 7h4" stroke="#333" />
  </svg>
);
const Sh = () => (
  <svg viewBox="0 0 14 14" className="w-[14px] h-[14px] shrink-0" fill="#fff" stroke="#222"><path d="M1 1h12v12H1z" /><path d="M1 5h9M1 9h9M4 1v12M7 1v12M10 1v12" /></svg>
);

type TreeNode = { lv: number; exp?: string; label: string; bold?: boolean; icon: React.ReactNode; sel?: boolean };
const TREE: TreeNode[] = [
  { lv: 0, exp: '+', label: 'atpvbaen.xls (ATPVBAEN.XLAM)', bold: true, icon: <Vba /> },
  { lv: 0, exp: '-', label: 'VBAProject (FUNCRES.XLAM)', bold: true, icon: <Vba /> },
  { lv: 1, exp: '+', label: 'Microsoft Excel Objects', icon: <Folder /> },
  { lv: 1, exp: '+', label: 'Modules', icon: <Folder /> },
  { lv: 0, exp: '-', label: 'VBAProject (Multiple_year_stock_data .xlsm)', bold: true, icon: <Vba /> },
  { lv: 1, exp: '-', label: 'Microsoft Excel Objects ', icon: <Folder open /> },
  { lv: 2, label: 'Sheet1 (2016)', icon: <Sh />, sel: true },
  { lv: 2, label: 'Sheet2 (2015)', icon: <Sh /> },
  { lv: 2, label: 'Sheet3 (2014)', icon: <Sh /> },
  { lv: 2, label: 'ThisWorkbook', icon: <svg viewBox="0 0 14 14" className="w-[14px] h-[14px] shrink-0"><path d="M3 1h10v12H3z" fill="#fff" stroke="#222" /><text x="5" y="12" fontSize="10" fontWeight="700" fill="#107c41" textAnchor="middle" fontFamily="Liberation Sans, sans-serif">X</text></svg> },
  { lv: 1, exp: '-', label: 'Modules ', icon: <Folder open /> },
  { lv: 2, label: 'Module1', icon: <Vba /> },
];

const PaneHeader = ({ title }: { title: string }) => (
  <div className="w-[179px] h-[22px] bg-[#bfcddb] flex items-center justify-between pl-[1px] text-[13px] tracking-[-0.3px] text-[#222] shrink-0">
    <span className="pb-[1px]">{title}</span>
    <div className="w-[20px] h-[20px] bg-[#f5f5f5] border border-[#999] flex items-center justify-center"><X className="w-[15px] h-[15px] text-black" strokeWidth={3} /></div>
  </div>
);

const ProjectTree = () => (
  <div className="w-[178px] h-[317px] bg-white border border-[#a0a0a0] flex flex-col overflow-hidden text-[12px] tracking-[-0.4px] text-[#222] shrink-0 ml-[1px]">
    <div className="flex-1 pt-[2px] overflow-hidden">
      {TREE.map((n) => (
        <div key={n.label} className={`h-[16px] flex items-center whitespace-nowrap ${n.lv === 0 ? 'pl-[7px]' : n.lv === 1 ? 'pl-[26px]' : 'pl-[49px]'}`}>
          {n.exp && <div className="w-[9px] h-[9px] border border-[#888] flex items-center justify-center text-[9px] leading-none text-[#334] shrink-0 mr-[3px]">{n.exp === '+' ? '+' : '–'}</div>}
          {n.icon}
          <span className={`ml-[2px] ${n.bold ? 'font-bold text-black' : ''} ${n.sel ? 'bg-[#f0f0f0] px-[1px]' : ''}`}>{n.label}</span>
        </div>
      ))}
    </div>
    <div className="h-[16px] bg-[#f0f0f0] flex items-center text-[#555]">
      <ChevronLeft className="w-[18px] h-[12px]" strokeWidth={3} />
      <div className="w-[77px] h-[16px] bg-[#cdcdcd]" />
      <div className="flex-1" />
      <ChevronRight className="w-[18px] h-[12px]" strokeWidth={3} />
    </div>
  </div>
);

const PropsGrid = () => (
  <div className="w-[172px] h-[519px] ml-[4px] border-2 border-[#888] bg-white text-[11.4px] tracking-[-0.2px] text-[#111] overflow-hidden shrink-0 outline outline-1 outline-[#ccc]">
    <div className="pl-[1px] pt-[1px]">
      {PROPS.map(([k, v], i) => (
        <div key={k} className="h-[16px] flex border-b border-[#c8c8c8] whitespace-nowrap leading-[15px]">
          <div className={`w-[87px] border-r border-[#c8c8c8] overflow-hidden shrink-0 ${i === 0 ? 'bg-[#f0f0f0]' : ''}`}>{k}</div>
          <div className="flex-1 overflow-hidden pl-[2px]">{v}</div>
        </div>
      ))}
    </div>
  </div>
);

const CodeLine = ({ text }: { text: string }) => (
  <div className="h-[16px] leading-[16px] whitespace-pre">
    {text.split(/(\b(?:If|Then|Else|End|Next|Sub)\b)/).map((part, i) =>
      i % 2 ? <span key={i} className="text-[#00007f]">{part}</span> : <span key={i}>{part}</span>,
    )}
  </div>
);

const CodeWindow = () => (
  <div className="w-[983px] h-[875px] ml-[293px] mt-[34px] bg-[#dce7f3] border border-[#555] rounded-t-[6px] flex flex-col shrink-0">
    <div className="h-[31px] bg-gradient-to-r from-[#b9cadc] to-[#dce9f6] rounded-t-[6px] flex items-center pl-[9px] text-[13px] tracking-[-0.4px] text-[#8f9aa6] shrink-0 relative">
      <svg viewBox="0 0 14 18" className="w-[16px] h-[20px] mr-[3px]"><path d="M3 9l4-7 4 7-4 7z" fill="#8b1fa8" /><path d="M1 11l6-2 6 2-6 2z" fill="#18b5b5" /><circle cx="7" cy="9" r="2" fill="#e5d23c" /></svg>
      Multiple_year_stock_data .xlsm - Module1 (Code)
      <div className="ml-auto flex gap-[3px] pr-[9px]">
        <div className="w-[31px] h-[17px] border border-[#7c8a9a] rounded-[2px] bg-[#e4edf6] flex items-end justify-center pb-[3px]"><div className="w-[9px] h-[5px] border border-[#333]" /></div>
        <div className="w-[31px] h-[17px] border border-[#7c8a9a] rounded-[2px] bg-[#e4edf6] flex items-center justify-center"><div className="w-[9px] h-[9px] border border-[#333]" /></div>
        <div className="w-[31px] h-[17px] border border-[#7c8a9a] rounded-[2px] bg-[#e4edf6] flex items-center justify-center"><X className="w-[12px] h-[12px] text-[#333]" strokeWidth={2} /></div>
      </div>
    </div>
    <div className="h-[27px] pl-[17px] pt-[2px] flex gap-[10px] text-[13px] tracking-[-0.3px] text-[#111] shrink-0">
      <div className="w-[469px] h-[22px] bg-white border border-[#8a8a8a] flex items-center justify-between px-[3px]">(General)<ChevronDown className="w-[11px] h-[11px] text-[#555]" /></div>
      <div className="w-[469px] h-[22px] bg-white border border-[#8a8a8a] flex items-center justify-between px-[3px]">VBAHomework<ChevronDown className="w-[11px] h-[11px] text-[#555]" /></div>
    </div>
    <div className="ml-[8px] mr-[8px] border-t-2 border-l border-[#7a7a7a] flex-1 flex flex-col bg-[#f0f0f0] mb-[10px]">
      <div className="flex-1 flex overflow-hidden">
        <div className="w-[21px] bg-[#efefef] border-r-2 border-black shrink-0" />
        <div className="flex-1 bg-white pt-[16px] pl-[10px] font-['Liberation_Mono',monospace] text-[13.33px] text-[#111] overflow-hidden">
          {CODE.map((l, i) => <CodeLine key={i} text={l} />)}
        </div>
        <div className="w-[16px] bg-[#f0f0f0] flex flex-col shrink-0 items-center text-[#555]">
          <div className="w-[16px] h-[6px] bg-white border border-[#999]" />
          <ChevronUp className="w-[12px] h-[12px] mt-[7px]" strokeWidth={3} />
          <div className="w-[16px] h-[427px] bg-[#cdcdcd] mt-[319px]" />
          <ChevronDown className="w-[12px] h-[12px] mt-[12px]" strokeWidth={3} />
        </div>
      </div>
      <div className="h-[15px] flex items-center bg-[#f0f0f0] text-[#555] shrink-0">
        <div className="w-[16px] h-[15px] bg-white border-r-2 border-b-2 border-[#777] flex items-center justify-center text-[9px] leading-none">≡</div>
        <div className="w-[16px] h-[15px] bg-[#e4e4e4] flex items-center justify-center text-[10px] leading-none text-black">≣</div>
        <ChevronLeft className="w-[14px] h-[12px] ml-[2px]" strokeWidth={3} />
        <div className="w-[98px] h-[15px] bg-[#cdcdcd] ml-[3px]" />
        <div className="flex-1" />
        <ChevronRight className="w-[14px] h-[12px]" strokeWidth={3} />
        <div className="w-[17px] text-[8px] text-[#aaa] text-center">⠿</div>
      </div>
    </div>
  </div>
);

const Vbe = () => (
  <div className="w-[1920px] h-[1080px] flex flex-col shrink-0 bg-white font-['Liberation_Sans',Arial,sans-serif]">
    <div className="h-[23px] bg-white flex items-center pl-[2px] text-[13px] tracking-[-0.32px] text-[#8f8f8f] shrink-0">
      <svg viewBox="0 0 16 16" className="w-[16px] h-[16px] ml-[1px] mr-[5px]"><path d="M1 4h14v11H1z" fill="#fff" stroke="#222" /><path d="M1 4h14v3H1z" fill="#1f7ab8" /><circle cx="9" cy="3" r="2.500" fill="#c02020" /><path d="M3 9h3M3 12h3" stroke="#e0a000" /></svg>
      Microsoft Visual Basic for Applications - Multiple_year_stock_data .xlsm
    </div>
    <div className="h-[26px] bg-[#f5f5f5] flex items-center pl-[18px] text-[13px] tracking-[-0.3px] text-[#222] shrink-0">
      {MENUS.map(([a, b, c], i) => (
        <div key={c} className={MENU_W[i]}>{a}<span className="underline">{b}</span>{c}</div>
      ))}
    </div>
    <VbeToolbar />
    <div className="flex-1 flex overflow-hidden">
      <div className="w-[187px] bg-[#f0f0f0] flex flex-col shrink-0">
        <PaneHeader title="Project - VBAProject" />
        <div className="w-[179px] h-[29px] flex items-center pl-[8px] gap-[4px] bg-[#f7f7f7] border-b-2 border-[#c8c8c8] shrink-0">
          <svg viewBox="0 0 16 14" className="w-[15px] h-[13px]" fill="#fff" stroke="#3b6ea8"><path d="M1 1h14v12H1zM1 4h14" /><path d="M3 6h4M3 9h4M9 6h4M9 9h4" stroke="#d15a20" /></svg>
          <svg viewBox="0 0 16 14" className="w-[15px] h-[13px] ml-[3px]" fill="#fff" stroke="#3b6ea8"><path d="M1 1h14v12H1zM1 4h14" /><path d="M3 6h4M3 9h4M9 6h4M9 9h4" stroke="#555" /></svg>
          <div className="w-[1px] h-[16px] bg-[#ccc] ml-[3px]" />
          <div className="w-[23px] h-[22px] border border-[#2b88d8] flex items-center justify-center ml-[1px] bg-[#eef5fb]"><Folder /></div>
        </div>
        <ProjectTree />
        <div className="h-[7px] shrink-0" />
        <PaneHeader title="Properties - Sheet1" />
        <div className="w-[178px] h-[19px] ml-[1px] mt-[4px] bg-white border border-[#888] flex items-center justify-between px-[3px] text-[12px] text-[#222] tracking-[-0.2px] shrink-0">
          <span><b>Sheet1</b>&nbsp; Worksheet</span><ChevronDown className="w-[10px] h-[10px]" />
        </div>
        <div className="h-[23px] flex items-end pl-[1px] text-[11.5px] tracking-[-0.1px] text-[#222] shrink-0">
          <div className="w-[65px] h-[21px] bg-white text-center leading-[19px] text-[#1a3a6a] border-t border-x border-[#ddd]">Alphabetic</div>
          <div className="w-[66px] h-[18px] bg-[#f5f5f5] text-center leading-[18px] border border-[#ccc]">Categorized</div>
        </div>
        <PropsGrid />
      </div>
      <div className="flex-1 bg-[#ababab] border-l border-[#666] overflow-hidden">
        <CodeWindow />
      </div>
    </div>
    <div className="h-[2px] bg-white shrink-0" />
    <TaskbarRight />
  </div>
);

export default function App() {
  return (
    <div className="flex w-[3840px] h-[1080px] overflow-hidden">
      <Excel />
      <Vbe />
    </div>
  );
}
